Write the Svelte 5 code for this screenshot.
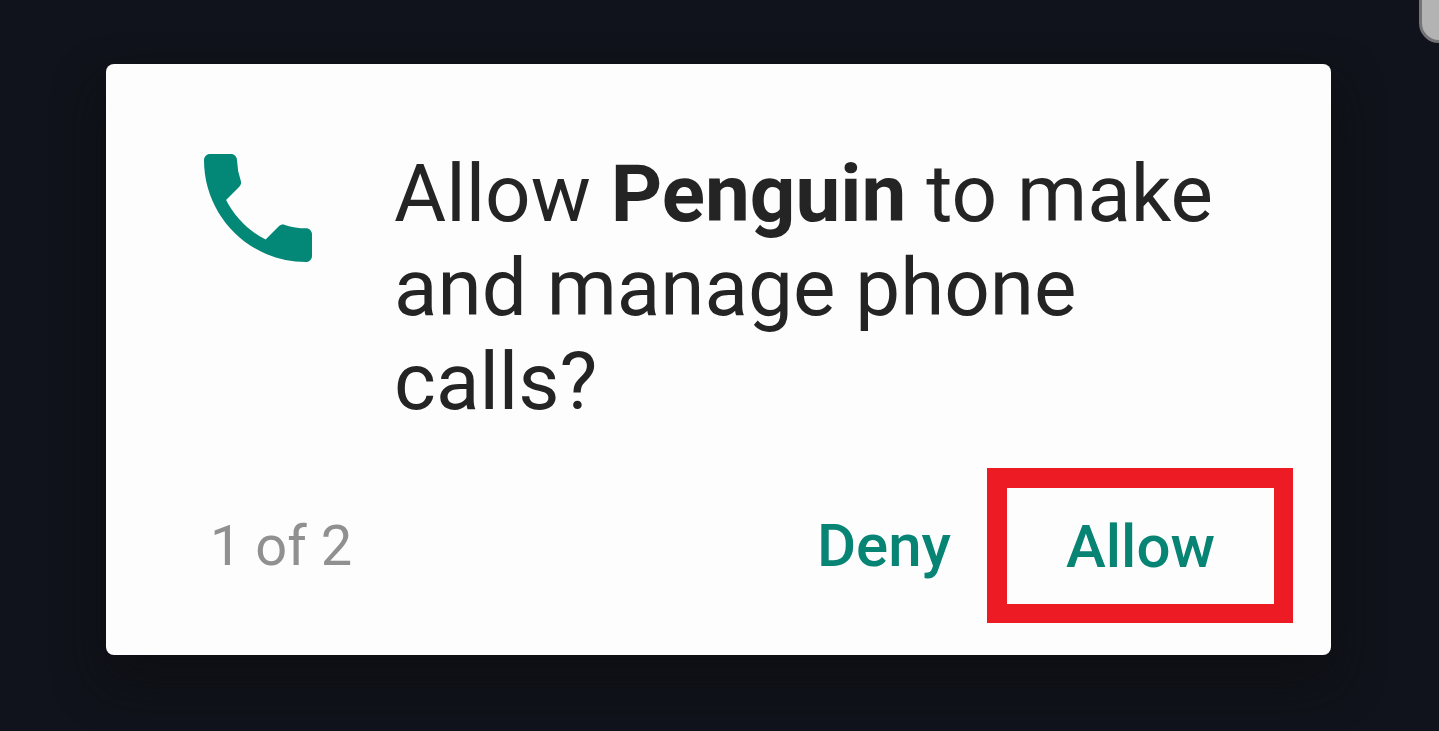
<script>
  const step = 1;
  const total = 2;
</script>

<main>
  <span class="handle" aria-hidden="true"></span>
  <div class="dialog" role="dialog" aria-labelledby="title">
    <div class="message">
      <svg viewBox="3 3 18 18" aria-hidden="true">
        <path d="M20.01 15.38c-1.23 0-2.42-.2-3.53-.56-.35-.12-.74-.03-1.01.24l-2.2 2.2c-2.83-1.44-5.15-3.75-6.59-6.59l2.2-2.2c.28-.27.36-.66.25-1.01A11.36 11.36 0 0 1 8.5 4c0-.55-.45-1-1-1H4c-.55 0-1 .45-1 1 0 9.39 7.61 17 17 17 .55 0 1-.45 1-1v-3.62c0-.55-.45-1-.99-1z" />
      </svg>
      <h1 id="title">Allow <strong>Penguin</strong> to make and manage phone calls?</h1>
    </div>
    <footer>
      <span class="count">{step} of {total}</span>
      <button class="deny" type="button">Deny</button>
      <button class="allow" type="button">Allow</button>
    </footer>
  </div>
</main>

<style>
  :global(body) {
    margin: 0;
    background: #10131b;
  }
  main {
    position: relative;
    box-sizing: border-box;
    min-height: 100vh;
    padding: 64px 108px 76px 106px;
    overflow: hidden;
    font-family: Roboto, sans-serif;
    background: #10131b;
  }
  .handle {
    position: absolute;
    top: -20px;
    right: -20px;
    box-sizing: border-box;
    width: 40px;
    height: 63px;
    border: 3px solid #747477;
    border-radius: 20px;
    background: #b3b3b4;
  }
  .dialog {
    box-sizing: border-box;
    padding: 83px 38px 32px 98px;
    border-radius: 8px;
    background: #fdfdfd;
    box-shadow: 0 24px 48px rgb(14 14 16 / 80%);
  }
  .message {
    display: flex;
    gap: 82px;
    align-items: flex-start;
  }
  svg {
    flex: none;
    width: 108px;
    height: 108px;
    margin-top: 7px;
    fill: #038777;
  }
  h1 {
    flex: 1;
    margin: 0;
    color: #242424;
    font-size: 80px;
    font-weight: 400;
    line-height: 94px;
  }
  strong {
    font-weight: 700;
  }
  footer {
    display: flex;
    align-items: center;
    margin-top: 39px;
  }
  .count {
    flex: 1;
    padding-left: 6px;
    color: #909090;
    font-size: 56px;
  }
  button {
    box-sizing: border-box;
    height: 155px;
    padding: 0;
    border: 0;
    background: none;
    color: #088474;
    font: 500 60px Roboto, sans-serif;
    cursor: pointer;
  }
  .deny {
    padding: 0 36px;
  }
  .allow {
    width: 306px;
    border: solid #ed1c24;
    border-width: 20px 19px 19px 20px;
  }
</style>
